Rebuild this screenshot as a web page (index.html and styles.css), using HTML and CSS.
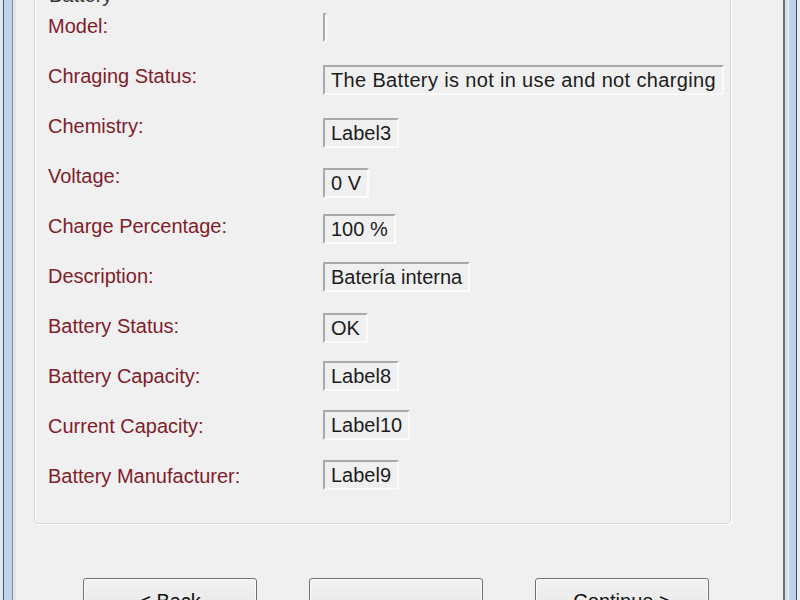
FILE: index.html
```html
<!DOCTYPE html>
<html lang="en">
<head>
<meta charset="utf-8">
<title>Battery Information</title>
<link rel="stylesheet" href="styles.css">
</head>
<body>
<div class="window">
  <div class="frame frame-left"></div>
  <div class="client">
    <div class="group">
      <span class="group-title">Battery</span>
      <div class="rows">
        <div class="label">Model:</div>
        <div class="cell"><span class="value empty off-12"></span></div>

        <div class="label">Chraging Status:</div>
        <div class="cell"><span class="value wide off-14">The Battery is not in use and not charging</span></div>

        <div class="label">Chemistry:</div>
        <div class="cell"><span class="value off-17">Label3</span></div>

        <div class="label">Voltage:</div>
        <div class="cell"><span class="value off-17">0 V</span></div>

        <div class="label">Charge Percentage:</div>
        <div class="cell"><span class="value off-13">100 %</span></div>

        <div class="label">Description:</div>
        <div class="cell"><span class="value off-11">Batería interna</span></div>

        <div class="label">Battery Status:</div>
        <div class="cell"><span class="value off-12">OK</span></div>

        <div class="label">Battery Capacity:</div>
        <div class="cell"><span class="value off-10">Label8</span></div>

        <div class="label">Current Capacity:</div>
        <div class="cell"><span class="value off-9">Label10</span></div>

        <div class="label">Battery Manufacturer:</div>
        <div class="cell"><span class="value off-9">Label9</span></div>
      </div>
    </div>
    <div class="buttons">
      <button class="btn" type="button">&lt; Back</button>
      <button class="btn" type="button"></button>
      <button class="btn" type="button">Continue &gt;</button>
    </div>
  </div>
  <div class="frame frame-right"></div>
</div>
</body>
</html>
```
FILE: styles.css
```css
html, body {
  margin: 0;
  padding: 0;
  height: 600px;
  overflow: hidden;
  background: #f0f0f0;
  font-family: "Liberation Sans", Arial, sans-serif;
}

.window {
  display: flex;
  width: 800px;
  height: 600px;
}

/* Aero window border strips */
.frame {
  flex: none;
  height: 100%;
}

.frame-left {
  width: 16px;
  background: linear-gradient(to right,
    #dfe7ef 0, #dfe7ef 3px,
    #4b5a6b 3px, #4b5a6b 4px,
    #bfd4eb 4px, #bfd4eb 12px,
    #7f8fa0 12px, #7f8fa0 13px,
    #e4e4e4 13px, #e4e4e4 16px);
}

.frame-right {
  width: 17px;
  background: linear-gradient(to right,
    #66707b 0, #66707b 2px,
    #d8dee5 2px, #d8dee5 5px,
    #eef2f6 5px, #eef2f6 6px,
    #bcd2ea 6px, #bcd2ea 13px,
    #3f4954 13px, #3f4954 14px,
    #e8eef4 14px, #e8eef4 17px);
}

.client {
  flex: 1;
  display: flex;
  flex-direction: column;
  background: #f0f0f0;
}

/* Group box */
.group {
  position: relative;
  margin: -3px 52px 0 18px;
  padding: 3px 0 22px 13px;
  border: 1px solid #d3d8dc;
  border-radius: 4px;
  box-shadow: inset 1px 1px 0 #ffffff, 1px 1px 0 #ffffff;
}

.group-title {
  position: absolute;
  top: -14px;
  left: 12px;
  padding: 0 2px;
  background: #f0f0f0;
  color: #3a3434;
  font-size: 20px;
  line-height: 23px;
}

.rows {
  display: grid;
  grid-template-columns: 275px 1fr;
  grid-auto-rows: 50px;
}

.label {
  align-self: center;
  color: #7f1d2b;
  font-size: 20px;
  line-height: 23px;
  white-space: nowrap;
}

.cell {
  display: flex;
  align-items: flex-start;
}

/* Fixed3D value labels */
.value {
  display: block;
  box-sizing: border-box;
  height: 30px;
  padding: 1px 6px 0;
  border-style: solid;
  border-width: 2px;
  border-color: #a9a9a9 #fbfbfb #fbfbfb #a9a9a9;
  color: #1c1c1c;
  font-size: 20px;
  line-height: 25px;
  white-space: nowrap;
}

.value.wide {
  letter-spacing: 0.35px;
}

.value.empty {
  width: 4px;
  height: 29px;
  padding: 0;
}

.off-9  { margin-top: 9px; }
.off-10 { margin-top: 10px; }
.off-11 { margin-top: 11px; }
.off-12 { margin-top: 12px; }
.off-13 { margin-top: 13px; }
.off-14 { margin-top: 14px; }
.off-17 { margin-top: 17px; }

/* Dialog buttons */
.buttons {
  display: flex;
  gap: 52px;
  margin-top: 54px;
  padding-left: 67px;
}

.btn {
  flex: none;
  width: 174px;
  height: 46px;
  border: 1px solid #707070;
  border-radius: 3px;
  box-shadow: inset 0 0 0 1px #fcfcfc;
  background: linear-gradient(to bottom, #f2f2f2 0, #ebebeb 50%, #dddddd 50%, #cfcfcf 100%);
  color: #111;
  font-family: "Liberation Sans", Arial, sans-serif;
  font-size: 20px;
  line-height: 23px;
  padding: 0;
}
```
